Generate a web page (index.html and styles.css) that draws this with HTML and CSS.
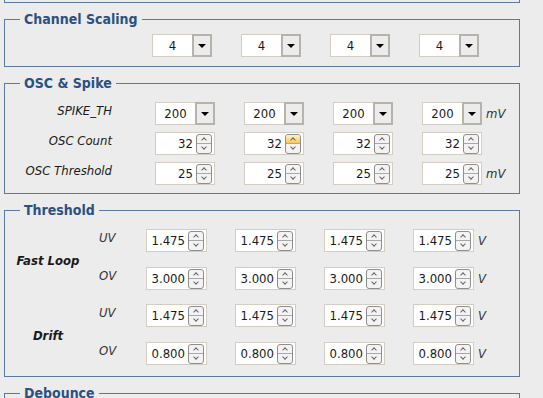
FILE: index.html
```html
<!DOCTYPE html>
<html lang="en">

<head>
    <meta charset="UTF-8" />
    <title>Channel settings</title>
    <link rel="stylesheet" href="styles.css">
</head>

<body>
    <div class="page">
        <div class="prev"></div>

        <fieldset class="group scaling">
            <legend>Channel Scaling</legend>
            <div class="row">
                <div class="cell"><div class="combo"><span class="val">4</span><span class="drop"></span></div></div>
                <div class="cell"><div class="combo"><span class="val">4</span><span class="drop"></span></div></div>
                <div class="cell"><div class="combo"><span class="val">4</span><span class="drop"></span></div></div>
                <div class="cell"><div class="combo"><span class="val">4</span><span class="drop"></span></div></div>
            </div>
        </fieldset>

        <fieldset class="group osc">
            <legend>OSC &amp; Spike</legend>
            <div class="rows">
                <div class="row">
                    <span class="name">SPIKE_TH</span>
                    <div class="cell"><div class="combo"><span class="val">200</span><span class="drop"></span></div></div>
                    <div class="cell"><div class="combo"><span class="val">200</span><span class="drop"></span></div></div>
                    <div class="cell"><div class="combo"><span class="val">200</span><span class="drop"></span></div></div>
                    <div class="cell"><div class="combo"><span class="val">200</span><span class="drop"></span></div><span class="unit">mV</span></div>
                </div>
                <div class="row">
                    <span class="name">OSC Count</span>
                    <div class="cell"><div class="spinbox"><span class="val">32</span><span class="spin"><i class="up"></i><i class="down"></i></span></div></div>
                    <div class="cell"><div class="spinbox"><span class="val">32</span><span class="spin hot"><i class="up"></i><i class="down"></i></span></div></div>
                    <div class="cell"><div class="spinbox"><span class="val">32</span><span class="spin"><i class="up"></i><i class="down"></i></span></div></div>
                    <div class="cell"><div class="spinbox"><span class="val">32</span><span class="spin"><i class="up"></i><i class="down"></i></span></div></div>
                </div>
                <div class="row">
                    <span class="name">OSC Threshold</span>
                    <div class="cell"><div class="spinbox"><span class="val">25</span><span class="spin"><i class="up"></i><i class="down"></i></span></div></div>
                    <div class="cell"><div class="spinbox"><span class="val">25</span><span class="spin"><i class="up"></i><i class="down"></i></span></div></div>
                    <div class="cell"><div class="spinbox"><span class="val">25</span><span class="spin"><i class="up"></i><i class="down"></i></span></div></div>
                    <div class="cell"><div class="spinbox"><span class="val">25</span><span class="spin"><i class="up"></i><i class="down"></i></span></div><span class="unit">mV</span></div>
                </div>
            </div>
        </fieldset>

        <fieldset class="group threshold">
            <legend>Threshold</legend>
            <div class="tgroup">
                <span class="tname">Fast Loop</span>
                <div class="trows">
                    <div class="trow">
                        <span class="sub">UV</span>
                        <div class="cell"><div class="spinbox wide"><span class="val">1.475</span><span class="spin"><i class="up"></i><i class="down"></i></span></div></div>
                        <div class="cell"><div class="spinbox wide"><span class="val">1.475</span><span class="spin"><i class="up"></i><i class="down"></i></span></div></div>
                        <div class="cell"><div class="spinbox wide"><span class="val">1.475</span><span class="spin"><i class="up"></i><i class="down"></i></span></div></div>
                        <div class="cell"><div class="spinbox wide"><span class="val">1.475</span><span class="spin"><i class="up"></i><i class="down"></i></span></div><span class="unit">V</span></div>
                    </div>
                    <div class="trow">
                        <span class="sub">OV</span>
                        <div class="cell"><div class="spinbox wide"><span class="val">3.000</span><span class="spin"><i class="up"></i><i class="down"></i></span></div></div>
                        <div class="cell"><div class="spinbox wide"><span class="val">3.000</span><span class="spin"><i class="up"></i><i class="down"></i></span></div></div>
                        <div class="cell"><div class="spinbox wide"><span class="val">3.000</span><span class="spin"><i class="up"></i><i class="down"></i></span></div></div>
                        <div class="cell"><div class="spinbox wide"><span class="val">3.000</span><span class="spin"><i class="up"></i><i class="down"></i></span></div><span class="unit">V</span></div>
                    </div>
                </div>
            </div>
            <div class="tgroup">
                <span class="tname">Drift</span>
                <div class="trows">
                    <div class="trow">
                        <span class="sub">UV</span>
                        <div class="cell"><div class="spinbox wide"><span class="val">1.475</span><span class="spin"><i class="up"></i><i class="down"></i></span></div></div>
                        <div class="cell"><div class="spinbox wide"><span class="val">1.475</span><span class="spin"><i class="up"></i><i class="down"></i></span></div></div>
                        <div class="cell"><div class="spinbox wide"><span class="val">1.475</span><span class="spin"><i class="up"></i><i class="down"></i></span></div></div>
                        <div class="cell"><div class="spinbox wide"><span class="val">1.475</span><span class="spin"><i class="up"></i><i class="down"></i></span></div><span class="unit">V</span></div>
                    </div>
                    <div class="trow">
                        <span class="sub">OV</span>
                        <div class="cell"><div class="spinbox wide"><span class="val">0.800</span><span class="spin"><i class="up"></i><i class="down"></i></span></div></div>
                        <div class="cell"><div class="spinbox wide"><span class="val">0.800</span><span class="spin"><i class="up"></i><i class="down"></i></span></div></div>
                        <div class="cell"><div class="spinbox wide"><span class="val">0.800</span><span class="spin"><i class="up"></i><i class="down"></i></span></div></div>
                        <div class="cell"><div class="spinbox wide"><span class="val">0.800</span><span class="spin"><i class="up"></i><i class="down"></i></span></div><span class="unit">V</span></div>
                    </div>
                </div>
            </div>
        </fieldset>

        <fieldset class="group debounce">
            <legend>Debounce</legend>
            <div class="filler"></div>
        </fieldset>
    </div>
</body>

</html>
```

FILE: styles.css
```css
body {
    margin: 0;
    background: #ececec;
    font-family: "DejaVu Sans Condensed", "DejaVu Sans", sans-serif;
    font-stretch: condensed;
    font-size: 13px;
    color: #1a1a1a;
    overflow: hidden;
}
.page {
    padding-left: 4px;
    width: 516px;
}
.prev {
    height: 2px;
    border: 1px solid #5b7aa3;
    border-top: none;
}
.group {
    margin: 8px 0 0 0;
    padding: 0;
    min-width: 0;
    border: 1px solid #5b7aa3;
}
.group legend {
    margin-left: 15px;
    padding: 0 4px;
    font-weight: bold;
    font-size: 14px;
    line-height: 16px;
    color: #2b5183;
}
.row {
    display: flex;
    height: 23px;
}
.cell {
    width: 89px;
    flex: none;
    display: flex;
    align-items: center;
}
.unit {
    margin-left: 4px;
    font-style: italic;
    color: #333;
}

/* combo box */
.combo {
    width: 60px;
    height: 23px;
    box-sizing: border-box;
    border: 1px solid #d3cdc4;
    background: #fff;
    display: flex;
}
.combo .val {
    flex: 1;
    text-align: center;
    line-height: 21px;
}
.combo .drop {
    width: 20px;
    box-sizing: border-box;
    margin: -1px -1px -1px 0;
    border: 2px solid #b7b3ac;
    background: #ececec;
    display: flex;
    align-items: center;
    justify-content: center;
}
.combo .drop::after {
    content: "";
    border-left: 4px solid transparent;
    border-right: 4px solid transparent;
    border-top: 4px solid #000;
}

/* spin box */
.spinbox {
    width: 60px;
    height: 23px;
    box-sizing: border-box;
    border: 1px solid #d3cdc4;
    background: #fff;
    display: flex;
    align-items: center;
}
.spinbox.wide {
    width: 61px;
}
.spinbox .val {
    flex: 1;
    text-align: right;
    padding-right: 3px;
    line-height: 21px;
}
.spin {
    width: 16px;
    height: 20px;
    box-sizing: border-box;
    margin-right: 2px;
    border: 1px solid #8e8e8e;
    border-radius: 3px;
    background: #f3f3f3;
    display: flex;
    flex-direction: column;
    overflow: hidden;
}
.spin i {
    flex: 1;
    display: flex;
    align-items: center;
    justify-content: center;
}
.spin .up {
    border-bottom: 1px solid #a8a8a8;
}
.spin .up::after,
.spin .down::after {
    content: "";
    width: 3px;
    height: 3px;
    border-left: 1px solid #666;
    border-top: 1px solid #666;
    transform: rotate(45deg);
    margin-top: 2px;
}
.spin .down::after {
    transform: rotate(225deg);
    margin-top: -2px;
}
.spin.hot .up {
    background: linear-gradient(#fff1c8, #f7c95a);
}

/* channel scaling */
.scaling .row {
    padding: 7px 0 9px 147px;
}

/* osc & spike */
.osc .rows {
    display: flex;
    flex-direction: column;
    gap: 7px;
    padding: 11px 0 8px 0;
}
.osc .name {
    width: 107px;
    margin-right: 43px;
    text-align: right;
    font-style: italic;
    line-height: 18px;
}

/* threshold */
.threshold {
    padding: 11px 0 11px 0;
}
.tgroup {
    display: flex;
}
.tgroup + .tgroup {
    margin-top: 14px;
}
.tname {
    width: 86px;
    display: flex;
    align-items: center;
    justify-content: center;
    font-weight: bold;
    font-style: italic;
    padding-top: 2px;
}
.trows {
    display: flex;
    flex-direction: column;
    gap: 15px;
}
.trow {
    display: flex;
    height: 23px;
}
.sub {
    width: 47px;
    padding-left: 8px;
    font-style: italic;
    line-height: 18px;
    color: #333;
}

.debounce .filler {
    height: 60px;
}
```
